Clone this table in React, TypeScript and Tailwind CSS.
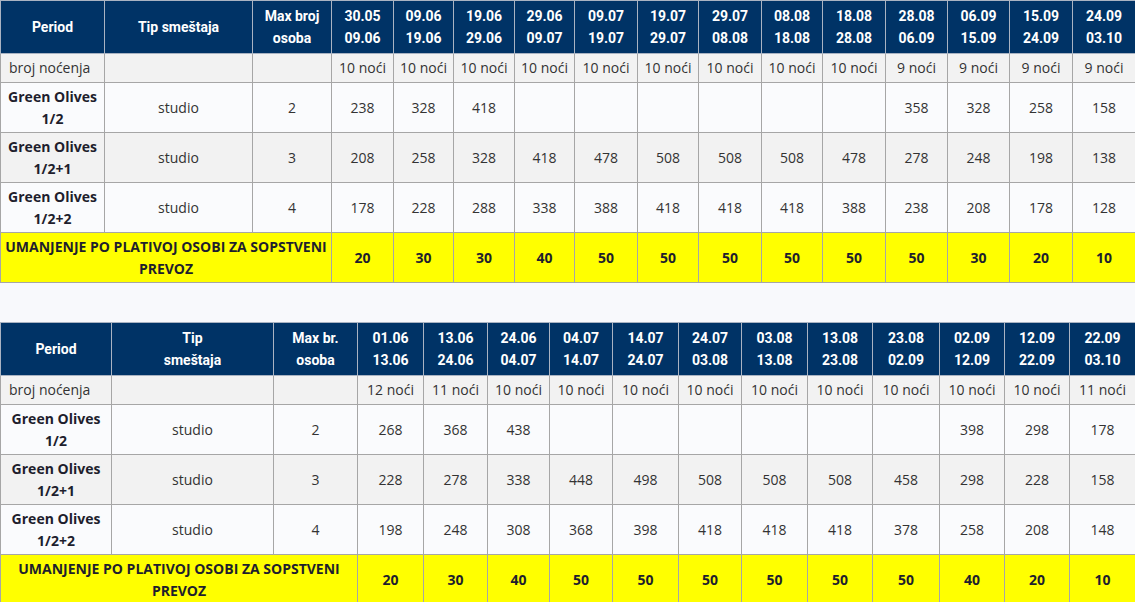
import React from 'react'

interface PriceTable {
  widths: number[]
  headers: string[]
  periods: [string, string][]
  nights: string[]
  rows: { name: string[]; type: string; max: string; prices: string[] }[]
  discount: string[]
}

const table1: PriceTable = {
  widths: [104, 148, 79, 62, 60, 61, 60, 63, 61, 63, 61, 63, 62, 62, 63, 63],
  headers: ['Period', 'Tip smeštaja', 'Max broj|osoba'],
  periods: [
    ['30.05', '09.06'], ['09.06', '19.06'], ['19.06', '29.06'], ['29.06', '09.07'],
    ['09.07', '19.07'], ['19.07', '29.07'], ['29.07', '08.08'], ['08.08', '18.08'],
    ['18.08', '28.08'], ['28.08', '06.09'], ['06.09', '15.09'], ['15.09', '24.09'],
    ['24.09', '03.10'],
  ],
  nights: ['10 noći', '10 noći', '10 noći', '10 noći', '10 noći', '10 noći', '10 noći', '10 noći', '10 noći', '9 noći', '9 noći', '9 noći', '9 noći'],
  rows: [
    { name: ['Green Olives', '1/2'], type: 'studio', max: '2', prices: ['238', '328', '418', '', '', '', '', '', '', '358', '328', '258', '158'] },
    { name: ['Green Olives', '1/2+1'], type: 'studio', max: '3', prices: ['208', '258', '328', '418', '478', '508', '508', '508', '478', '278', '248', '198', '138'] },
    { name: ['Green Olives', '1/2+2'], type: 'studio', max: '4', prices: ['178', '228', '288', '338', '388', '418', '418', '418', '388', '238', '208', '178', '128'] },
  ],
  discount: ['20', '30', '30', '40', '50', '50', '50', '50', '50', '50', '30', '20', '10'],
}

const table2: PriceTable = {
  widths: [111, 162, 84, 66, 64, 62, 63, 66, 63, 66, 65, 67, 65, 65, 66],
  headers: ['Period', 'Tip|smeštaja', 'Max br.|osoba'],
  periods: [
    ['01.06', '13.06'], ['13.06', '24.06'], ['24.06', '04.07'], ['04.07', '14.07'],
    ['14.07', '24.07'], ['24.07', '03.08'], ['03.08', '13.08'], ['13.08', '23.08'],
    ['23.08', '02.09'], ['02.09', '12.09'], ['12.09', '22.09'], ['22.09', '03.10'],
  ],
  nights: ['12 noći', '11 noći', '10 noći', '10 noći', '10 noći', '10 noći', '10 noći', '10 noći', '10 noći', '10 noći', '10 noći', '11 noći'],
  rows: [
    { name: ['Green Olives', '1/2'], type: 'studio', max: '2', prices: ['268', '368', '438', '', '', '', '', '', '', '398', '298', '178'] },
    { name: ['Green Olives', '1/2+1'], type: 'studio', max: '3', prices: ['228', '278', '338', '448', '498', '508', '508', '508', '458', '298', '228', '158'] },
    { name: ['Green Olives', '1/2+2'], type: 'studio', max: '4', prices: ['198', '248', '308', '368', '398', '418', '418', '418', '378', '258', '208', '148'] },
  ],
  discount: ['20', '30', '40', '50', '50', '50', '50', '50', '50', '40', '20', '10'],
}

const headCell = 'border border-[#a9b3c2] bg-[#003366] text-white font-bold text-[14px] leading-[22px] text-center align-middle px-1 font-[Roboto,Arial,sans-serif]'
const bodyCell = 'border border-[#a6a6a6] text-[14px] leading-[22px] text-center align-middle px-1'

function Table({ t }: { t: PriceTable }) {
  return (
    <table className="table-fixed border-collapse text-[#222] font-['Open_Sans',sans-serif]" style={{ width: 1135 }}>
      <colgroup>
        {t.widths.map((w, i) => (
          <col key={i} style={{ width: w }} />
        ))}
      </colgroup>
      <tbody>
        <tr className="h-[53px]">
          {t.headers.map((h, i) => (
            <td key={i} className={headCell}>
              {h.split('|').map((line, j) => (
                <div key={j}>{line}</div>
              ))}
            </td>
          ))}
          {t.periods.map((p, i) => (
            <td key={i} className={headCell}>
              <div>{p[0]}</div>
              <div>{p[1]}</div>
            </td>
          ))}
        </tr>
        <tr className="h-[29px] bg-[#f2f2f2]">
          <td className={`${bodyCell} !text-left pl-2 text-[#333]`}>broj noćenja</td>
          <td className={bodyCell}></td>
          <td className={bodyCell}></td>
          {t.nights.map((n, i) => (
            <td key={i} className={`${bodyCell} text-[#333] whitespace-nowrap`}>{n}</td>
          ))}
        </tr>
        {t.rows.map((r, ri) => (
          <tr key={ri} className={`h-[50px] ${ri === 1 ? 'bg-[#f2f2f2]' : 'bg-[#fafbfd]'}`}>
            <td className={`${bodyCell} font-bold text-[#1e1e2d]`}>
              <div>{r.name[0]}</div>
              <div>{r.name[1]}</div>
            </td>
            <td className={`${bodyCell} text-[#333]`}>{r.type}</td>
            <td className={`${bodyCell} text-[#333]`}>{r.max}</td>
            {r.prices.map((p, i) => (
              <td key={i} className={`${bodyCell} text-[#333]`}>{p}</td>
            ))}
          </tr>
        ))}
        <tr className="h-[50px] bg-[#ffff00]">
          <td colSpan={3} className={`${bodyCell} font-bold text-[13px] text-[#1e1e2d]`}>
            <div>UMANJENJE PO PLATIVOJ OSOBI ZA SOPSTVENI</div>
            <div>PREVOZ</div>
          </td>
          {t.discount.map((d, i) => (
            <td key={i} className={`${bodyCell} font-bold text-[#1e1e2d]`}>{d}</td>
          ))}
        </tr>
      </tbody>
    </table>
  )
}

export default function App() {
  return (
    <div className="min-h-screen w-[1135px] bg-[#f8f9fc] overflow-hidden">
      <Table t={table1} />
      <div className="h-[39px]" />
      <Table t={table2} />
    </div>
  )
}
